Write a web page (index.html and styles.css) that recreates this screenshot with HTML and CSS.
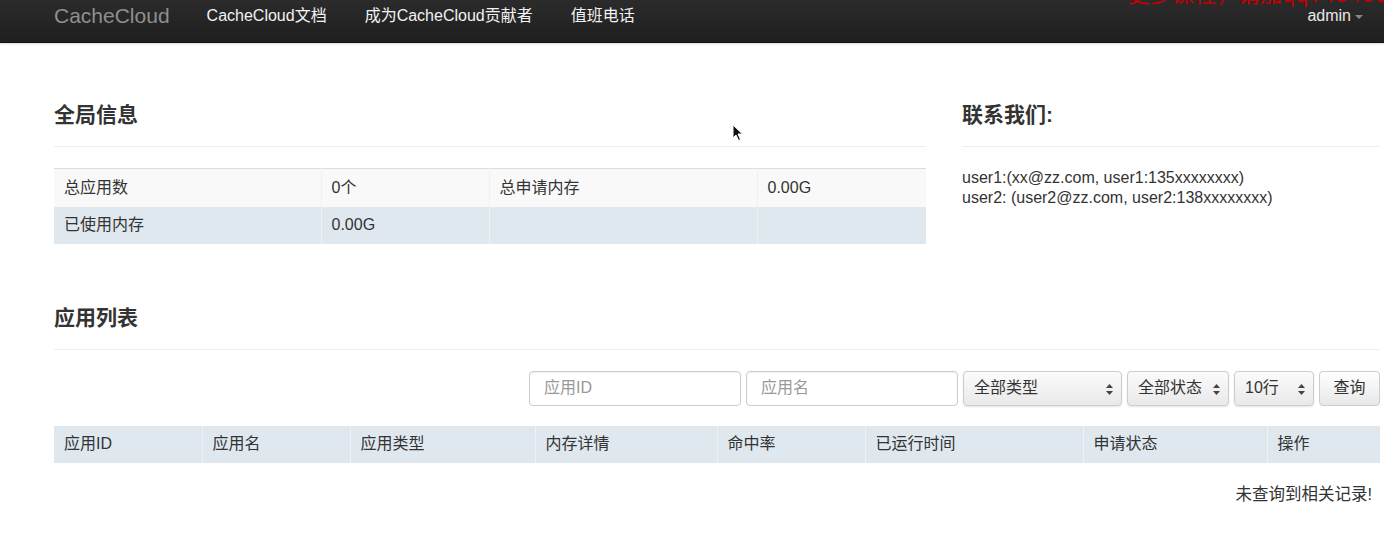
FILE: index.html
```html
<!DOCTYPE html>
<html lang="zh-CN">
<head>
<meta charset="utf-8">
<title>CacheCloud</title>
<link rel="stylesheet" href="styles.css">
</head>
<body>
<header class="navbar">
  <a class="brand">CacheCloud</a>
  <nav class="nav">
    <a>CacheCloud文档</a>
    <a>成为CacheCloud贡献者</a>
    <a>值班电话</a>
  </nav>
  <div class="user">admin <span class="caret"></span></div>
  <div class="watermark">更多课程，请加qq:48406889</div>
</header>

<main class="page">
  <div class="top-row">
    <section class="left-col">
      <h3 class="heading">全局信息</h3>
      <hr class="rule">
      <table class="info-table">
        <tr class="odd">
          <td class="c1">总应用数</td><td class="c2">0个</td><td class="c3">总申请内存</td><td class="c4">0.00G</td>
        </tr>
        <tr class="even">
          <td>已使用内存</td><td>0.00G</td><td></td><td></td>
        </tr>
      </table>
    </section>
    <section class="right-col">
      <h3 class="heading">联系我们:</h3>
      <hr class="rule">
      <p class="contact">user1:(xx@zz.com, user1:135xxxxxxxx)<br>user2: (user2@zz.com, user2:138xxxxxxxx)</p>
    </section>
  </div>

  <section class="apps">
    <h3 class="heading">应用列表</h3>
    <hr class="rule">
    <form class="filters">
      <input class="field w-id" type="text" placeholder="应用ID">
      <input class="field w-name" type="text" placeholder="应用名">
      <div class="sel w-type"><span>全部类型</span><svg class="arrows" width="7" height="11" viewBox="0 0 7 11"><path d="M3.5 0L7 4H0z M3.5 11L0 7h7z" fill="#444"/></svg></div>
      <div class="sel w-state"><span>全部状态</span><svg class="arrows" width="7" height="11" viewBox="0 0 7 11"><path d="M3.5 0L7 4H0z M3.5 11L0 7h7z" fill="#444"/></svg></div>
      <div class="sel w-rows"><span>10行</span><svg class="arrows" width="7" height="11" viewBox="0 0 7 11"><path d="M3.5 0L7 4H0z M3.5 11L0 7h7z" fill="#444"/></svg></div>
      <button class="btn" type="button">查询</button>
    </form>
    <table class="list-table">
      <thead>
        <tr>
          <th class="h1">应用ID</th>
          <th class="h2">应用名</th>
          <th class="h3">应用类型</th>
          <th class="h4">内存详情</th>
          <th class="h5">命中率</th>
          <th class="h6">已运行时间</th>
          <th class="h7">申请状态</th>
          <th class="h8">操作</th>
        </tr>
      </thead>
    </table>
    <p class="empty">未查询到相关记录!</p>
  </section>
</main>

<svg class="cursor" width="12" height="18" viewBox="0 0 12 18"><path d="M1 1v13l3-3 2.5 5.5 2-1L6 10h4.5z" fill="#111" stroke="#fff" stroke-width="1"/></svg>
</body>
</html>
```

FILE: styles.css
```css
* { box-sizing: border-box; }
html, body { margin: 0; padding: 0; background: #fff; }
body {
  font-family: "Liberation Sans", Arial, "Noto Sans CJK SC", sans-serif;
  font-size: 16px;
  color: #333;
  position: relative;
  min-height: 549px;
}

/* navbar */
.navbar {
  position: relative;
  height: 43px;
  background: linear-gradient(#2b2b2b, #1f1f1f);
  border-bottom: 1px solid #111;
  box-shadow: 0 1px 2px rgba(0,0,0,0.15);
  display: flex;
  align-items: center;
  padding-left: 54px;
  padding-bottom: 10px;
  overflow: hidden;
}
.brand {
  font-size: 21px;
  color: #8f8f8f;
  margin-right: 37px;
  line-height: 30px;
}
.nav { display: flex; gap: 38px; }
.nav a { color: #f2f2f2; font-size: 16px; line-height: 30px; }
.user {
  margin-left: auto;
  margin-right: 21px;
  color: #e8e8e8;
  font-size: 16px;
  line-height: 30px;
  display: flex;
  align-items: center;
  gap: 4px;
}
.caret {
  display: inline-block;
  width: 0; height: 0;
  border-left: 4px solid transparent;
  border-right: 4px solid transparent;
  border-top: 4px solid #888;
  margin-top: 2px;
}
.watermark {
  position: absolute;
  left: 1128px;
  top: -14px;
  font-family: "Liberation Mono", "Noto Sans CJK SC", monospace;
  font-size: 22px;
  line-height: 22px;
  color: #c40000;
  white-space: nowrap;
}

/* page */
.page { padding: 57px 4px 0 54px; }
.top-row { display: flex; gap: 36px; }
.left-col { width: 872px; }
.right-col { flex: 1; }

.heading {
  margin: 0;
  font-size: 21px;
  line-height: 30px;
  font-weight: bold;
  color: #333;
}
.rule {
  margin: 16px 0 21px;
  border: 0;
  border-top: 1px solid #eee;
  height: 0;
}

.info-table {
  width: 100%;
  border-collapse: collapse;
  border-top: 1px solid #ddd;
}
.info-table td {
  padding: 0 10px;
  font-size: 16px;
  line-height: 20px;
  border-left: 1px solid #eef1f4;
}
.info-table td:first-child { border-left: 0; }
.info-table tr.odd td { background: #f9f9f9; height: 38px; }
.info-table tr.even td { background: #dfe8ef; height: 37px; }
.c1 { width: 267px; }
.c2 { width: 168px; }
.c3 { width: 268px; }

.contact {
  margin: 0;
  font-size: 16px;
  line-height: 20px;
  color: #333;
}

.apps { margin-top: 59px; }

.filters {
  display: flex;
  justify-content: flex-end;
  gap: 5px;
  margin-bottom: 20px;
}
.field {
  height: 35px;
  border: 1px solid #ccc;
  border-radius: 4px;
  padding: 0 14px;
  font: 16px "Liberation Sans", "Noto Sans CJK SC", sans-serif;
  color: #333;
  box-shadow: inset 0 1px 1px rgba(0,0,0,0.06);
}
.field::placeholder { color: #999; }
.w-id { width: 212px; }
.w-name { width: 212px; }
.sel {
  position: relative;
  height: 35px;
  border: 1px solid #ccc;
  border-radius: 4px;
  background: linear-gradient(#fbfbfb, #e9e9e9);
  box-shadow: 0 1px 2px rgba(0,0,0,0.1);
  display: flex;
  align-items: center;
  padding-left: 10px;
  font-size: 16px;
  line-height: 20px;
  color: #333;
}
.sel .arrows { position: absolute; right: 8px; top: 12px; }
.w-type { width: 159px; }
.w-state { width: 102px; }
.w-rows { width: 80px; }
.btn {
  width: 61px;
  height: 35px;
  border: 1px solid #ccc;
  border-radius: 4px;
  background: linear-gradient(#fff, #e8e8e8);
  font: 16px/20px "Liberation Sans", "Noto Sans CJK SC", sans-serif;
  color: #333;
  padding: 0;
}

.list-table {
  width: 100%;
  border-collapse: collapse;
}
.list-table th {
  height: 37px;
  background: #dfe8ef;
  text-align: left;
  font-weight: normal;
  font-size: 16px;
  line-height: 20px;
  padding: 0 10px;
  border-left: 1px solid #eef2f5;
  color: #333;
}
.list-table th:first-child { border-left: 0; }
.h1 { width: 148px; }
.h2 { width: 148px; }
.h3 { width: 185px; }
.h4 { width: 182px; }
.h5 { width: 148px; }
.h6 { width: 218px; }
.h7 { width: 184px; }

.empty {
  margin: 21px 0 0;
  text-align: right;
  padding-right: 8px;
  font-size: 16.5px;
  line-height: 20px;
  color: #333;
}

.cursor {
  position: absolute;
  left: 732px;
  top: 124px;
}
```
